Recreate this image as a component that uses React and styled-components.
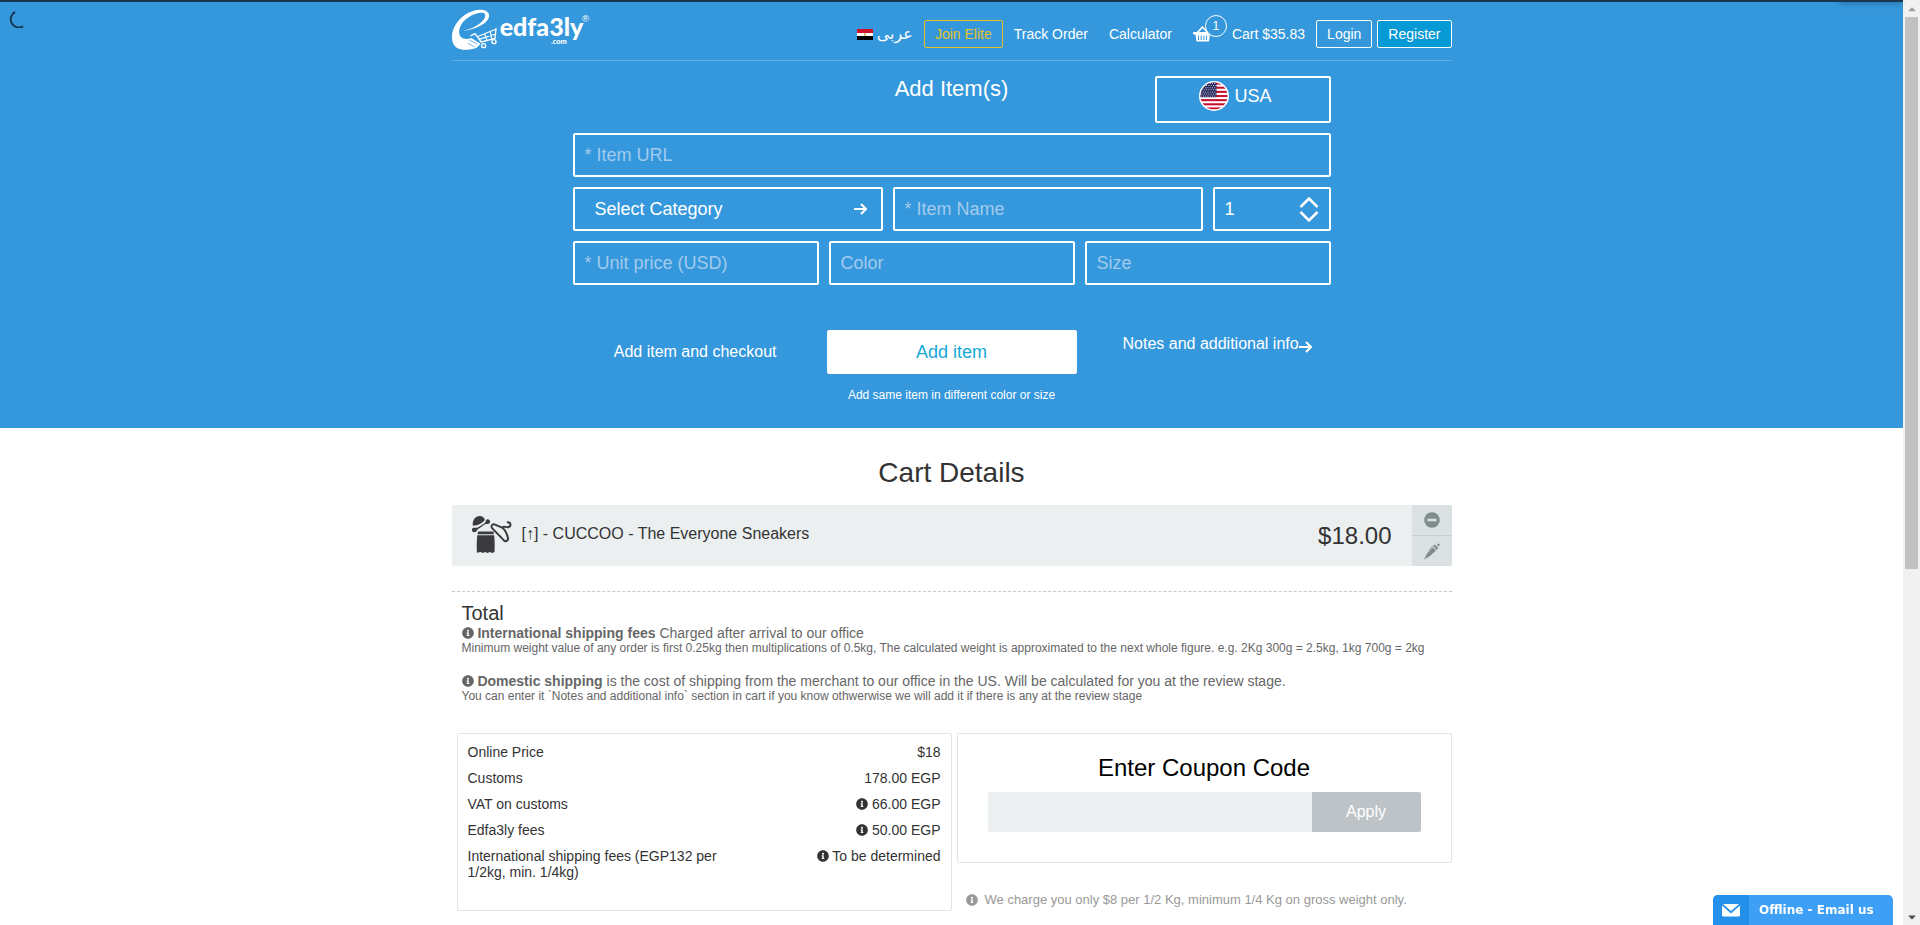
import React from "react";
import styled, { createGlobalStyle } from "styled-components";
import { FaInfoCircle, FaMinusCircle, FaCaretUp, FaCaretDown } from "react-icons/fa";

const GlobalStyle = createGlobalStyle`
  * { box-sizing: border-box; }
  body { margin: 0; background: #fff; color: #333; font-family: "Liberation Sans", Arial, sans-serif; font-size: 14px; }
  h1, h2, h3, p { margin: 0; font-weight: 400; }
  a { color: inherit; text-decoration: none; }
  button, input, select { font: inherit; color: inherit; }
`;

const Shell = styled.div`
  display: grid;
  grid-template-columns: minmax(0, 1fr) 17px;
  height: 100vh;
  overflow: hidden;
`;

const Page = styled.div`
  min-width: 0;
  overflow: hidden;
`;

const Scrollbar = styled.div`
  display: flex;
  flex-direction: column;
  background: #f1f1f1;
  padding: 0 2px;
`;

const ScrollCap = styled.span`
  display: flex;
  align-items: center;
  justify-content: center;
  height: 17px;
  font-size: 12px;
  color: ${(p) => (p.$active ? "#505050" : "#a3a3a3")};
`;

const ScrollTrack = styled.div`
  flex: 1;
`;

const ScrollThumb = styled.div`
  height: 62%;
  background: #c1c1c1;
`;

const Hero = styled.div`
  position: relative;
  background: #3598dc;
  border-top: 2px solid #17384f;
  color: #fff;
  padding-bottom: 25px;
  &::after {
    content: "";
    position: absolute;
    top: -2px;
    right: 0;
    width: 64px;
    height: 2px;
    background: #17384f;
    box-shadow: 0 0 6px #17384f;
  }
`;

const Spinner = styled.svg`
  position: absolute;
  top: 8px;
  left: 9px;
`;

const Container = styled.div`
  width: 100%;
  max-width: 1000px;
  margin: 0 auto;
`;

const Header = styled(Container)`
  display: flex;
  justify-content: space-between;
  align-items: flex-start;
  height: 59px;
  padding-top: 7px;
  border-bottom: 1px solid #62b0e4;
`;

const Nav = styled.nav`
  display: flex;
  align-items: center;
  gap: 11px;
  padding-top: 11px;
`;

const NavGroup = styled.div`
  display: flex;
  align-items: center;
  gap: ${(p) => p.$gap};
`;

const NavLink = styled.a`
  line-height: 28px;
`;

const LanguageLink = styled.a`
  display: flex;
  align-items: center;
  gap: 4px;
  font-family: "DejaVu Sans", sans-serif;
  font-size: 16px;
  line-height: 28px;
`;

const CartLink = styled.a`
  position: relative;
  display: flex;
  align-items: center;
  gap: 20px;
  line-height: 28px;
`;

const CartCount = styled.span`
  position: absolute;
  top: -5px;
  left: 12px;
  width: 22px;
  height: 22px;
  border: 1px solid #fff;
  border-radius: 50%;
  background: #3598dc;
  font-size: 12px;
  line-height: 20px;
  text-align: center;
`;

const NavButton = styled.button`
  height: 28px;
  padding: 0 10px;
  border: 1px solid ${(p) => p.$border || "#fff"};
  border-radius: 2px;
  background: ${(p) => p.$fill || "transparent"};
  color: ${(p) => p.$color || "#fff"};
`;

const ItemForm = styled.form`
  display: flex;
  flex-direction: column;
  gap: 10px;
  max-width: 758px;
  margin: 0 auto;
  padding-top: 15px;
`;

const FormHead = styled.div`
  display: grid;
  grid-template-columns: 1fr auto 1fr;
`;

const FormTitle = styled.h1`
  grid-column: 2;
  font-size: 22px;
  line-height: 26px;
`;

const CountryButton = styled.button`
  justify-self: end;
  display: flex;
  justify-content: center;
  align-items: flex-start;
  gap: 5px;
  width: 176px;
  height: 47px;
  padding: 3px 14px 0 0;
  border: 2px solid #fff;
  border-radius: 2px;
  background: transparent;
  font-size: 18px;
  line-height: 30px;
`;

const FieldRow = styled.div`
  display: grid;
  grid-template-columns: ${(p) => p.$columns};
  gap: 10px;
`;

const Field = styled.div`
  position: relative;
  display: flex;
  align-items: center;
  height: 44px;
  border: 2px solid #fff;
  border-radius: 2px;
`;

const fieldBase = `
  width: 100%;
  height: 100%;
  border: 0;
  outline: 0;
  background: transparent;
  font-size: 18px;
  appearance: none;
`;

const TextInput = styled.input`
  ${fieldBase}
  padding: 0 10px;
  &::placeholder { color: #a2cbed; opacity: 1; }
`;

const NumberInput = styled(TextInput)`
  appearance: textfield;
  &::-webkit-inner-spin-button { appearance: none; }
`;

const CategorySelect = styled.select`
  ${fieldBase}
  padding: 0 20px;
`;

const SelectArrow = styled.span`
  position: absolute;
  right: 14px;
  display: flex;
  pointer-events: none;
`;

const Stepper = styled.div`
  display: flex;
  flex-direction: column;
  gap: 3px;
  padding-right: 10px;
`;

const StepButton = styled.button`
  display: flex;
  padding: 0;
  border: 0;
  background: transparent;
`;

const Actions = styled.div`
  display: grid;
  grid-template-columns: 1fr 250px 1fr;
  column-gap: 46px;
  row-gap: 13px;
  align-items: start;
  margin-top: 35px;
`;

const TextButton = styled.button`
  justify-self: end;
  padding: 0 4px;
  border: 0;
  background: transparent;
  font-size: 16px;
  line-height: 44px;
  white-space: nowrap;
`;

const AddButton = styled.button`
  height: 44px;
  border: 0;
  border-radius: 2px;
  background: #fff;
  color: #14aad8;
  font-size: 18px;
`;

const NotesLink = styled.a`
  display: flex;
  align-items: center;
  font-size: 16px;
  line-height: 28px;
  white-space: nowrap;
  svg { margin-top: 5px; }
`;

const VariantLink = styled.a`
  grid-column: 2;
  font-size: 12px;
  line-height: 16px;
  text-align: center;
`;

const CartTitle = styled.h2`
  padding: 28px 0 15px;
  font-size: 28px;
  line-height: 34px;
  text-align: center;
`;

const CartItem = styled.div`
  display: flex;
  align-items: stretch;
  height: 61px;
  border-radius: 2px;
  overflow: hidden;
  background: #ebeff0;
`;

const ItemName = styled.a`
  display: flex;
  align-items: center;
  gap: 10px;
  flex: 1;
  padding: 0 0 3px 19px;
  font-size: 16px;
`;

const ItemPrice = styled.span`
  align-self: center;
  padding-right: 20px;
  font-size: 24px;
`;

const ItemTools = styled.div`
  display: flex;
  flex-direction: column;
  width: 40px;
`;

const ToolButton = styled.button`
  display: flex;
  flex: 1;
  align-items: center;
  justify-content: center;
  padding: 0;
  border: 0;
  background: #dbe1e3;
  color: #7f8c8d;
  font-size: 16px;
  & + & { border-top: 1px solid #c8d0d2; }
`;

const Totals = styled.section`
  margin-top: 25px;
  padding: 9px 10px 30px;
  border-top: 1px dashed #c8c8c8;
`;

const TotalTitle = styled.h3`
  font-size: 20px;
  line-height: 24px;
`;

const FeeNote = styled.div`
  color: #666;
  & + & { margin-top: 18px; }
`;

const FeeLead = styled.p`
  line-height: 16px;
`;

const FeeDetail = styled.p`
  font-size: 12px;
  line-height: 14px;
`;

const InfoIcon = styled(FaInfoCircle)`
  width: 12px;
  height: 12px;
  vertical-align: -1px;
`;

const Panels = styled.div`
  display: grid;
  grid-template-columns: 1fr 1fr;
  align-items: start;
  gap: 5px;
  padding-left: 5px;
`;

const Panel = styled.section`
  padding: ${(p) => p.$padding};
  border: 1px solid #e0e4e5;
  border-radius: 2px;
`;

const PriceTable = styled.table`
  width: 100%;
  border-collapse: collapse;
  line-height: 16px;
  th, td { padding: 5px 0; font-weight: 400; vertical-align: top; }
  th { width: 55%; text-align: left; }
  td { text-align: right; }
`;

const CouponTitle = styled.h2`
  color: #000;
  font-size: 24px;
  line-height: 28px;
  text-align: center;
`;

const CouponForm = styled.form`
  display: flex;
  height: 40px;
  margin-top: 10px;
`;

const CouponInput = styled.input`
  flex: 1;
  min-width: 0;
  border: 0;
  border-radius: 2px 0 0 2px;
  background: #ebeff0;
`;

const ApplyButton = styled.button`
  width: 109px;
  border: 0;
  border-radius: 0 2px 2px 0;
  background: #bdc3c7;
  color: #fff;
  font-size: 16px;
`;

const ChargeNote = styled.p`
  display: flex;
  align-items: center;
  gap: 7px;
  margin-top: 29px;
  padding-left: 9px;
  color: #999;
  font-size: 13px;
  line-height: 16px;
`;

const ChatButton = styled.button`
  position: fixed;
  right: 27px;
  bottom: 0;
  display: flex;
  align-items: stretch;
  width: 180px;
  height: 30px;
  padding: 0;
  border: 0;
  border-radius: 5px 5px 0 0;
  overflow: hidden;
  background: #3e9ff7;
  color: #fff;
  font-family: "DejaVu Sans", Verdana, sans-serif;
  font-size: 12px;
  font-weight: 700;
`;

const ChatIcon = styled.span`
  display: flex;
  align-items: center;
  justify-content: center;
  width: 36px;
  background: #2590e9;
`;

const ChatLabel = styled.span`
  flex: 1;
  align-self: center;
  padding-left: 10px;
  text-align: left;
`;

function Logo() {
  return (
    <svg width="138" height="42" viewBox="36 27 414 126" fill="#fff" role="img" aria-label="edfa3ly.com">
      <path d="M70 92C112 88 151 66 147 44C143 22 100 26 74 45C45 66 32 96 37 122C42 151 76 155 110 143L122 131L94 114C70 122 52 112 59 85C67 54 112 33 131 39C148 49 118 82 70 92Z" />
      <g fill="none" stroke="#fff" strokeLinecap="round" strokeLinejoin="round">
        <path d="M93 107L105 101L124 126L165 115L168 86" strokeWidth="4" />
        <path d="M112 110L167 88M117 118L167 102M134 103L141 121M151 96L155 117" strokeWidth="3.5" />
        <circle cx="131" cy="137" r="6" strokeWidth="4" />
        <circle cx="162" cy="125" r="6" strokeWidth="4" />
      </g>
      <path d="M90 112L116 120M88 120L112 132M84 130L104 141" stroke="#3598dc" strokeWidth="2" />
      <text x="179" y="109" fontFamily="Lato, sans-serif" fontSize="75" fontWeight="900">edfa3ly</text>
      <text x="333" y="131" fontFamily="Lato, sans-serif" fontSize="22" fontWeight="900">.com</text>
      <text x="426" y="65" fontFamily="Liberation Sans, sans-serif" fontSize="29">®</text>
    </svg>
  );
}

function EgyptFlag() {
  return (
    <svg width="16" height="11" viewBox="0 0 16 11" aria-hidden="true">
      <rect width="16" height="4" fill="#ce1126" />
      <rect y="4" width="16" height="4" fill="#fff" />
      <rect y="7" width="16" height="4" fill="#000" />
      <path d="M7 4.5h2v2H7z" fill="#d9a441" />
    </svg>
  );
}

function UsaFlag() {
  const stripes = [0, 1, 2, 3, 4, 5, 6];
  const stars = [];
  for (let row = 0; row < 7; row += 1) {
    for (let col = 0; col < 7; col += 1) {
      stars.push(<circle key={`${row}-${col}`} cx={2 + col * 2.3 + (row % 2)} cy={2.5 + row * 2.1} r="0.5" />);
    }
  }
  return (
    <svg width="30" height="30" viewBox="0 0 30 30" aria-hidden="true">
      <clipPath id="usa-disc"><circle cx="15" cy="15" r="13.5" /></clipPath>
      <circle cx="15" cy="15" r="15" fill="#fff" />
      <g clipPath="url(#usa-disc)">
        {stripes.map((i) => <rect key={i} y={1.5 + i * 4.15} width="30" height="2.1" fill="#c8102e" />)}
        <rect width="17.5" height="16.2" fill="#2b2a5e" />
        <g fill="#fff">{stars}</g>
      </g>
    </svg>
  );
}

function Basket() {
  return (
    <svg width="19" height="16" viewBox="0 0 19 16" aria-hidden="true">
      <path d="M4 7L9.500 1L15 7" fill="none" stroke="#fff" strokeWidth="1.6" />
      <path d="M1 6h17a1 1 0 0 1 0 2.500h-1L16 15.500H3.500L2.500 8.500H1A1 1 0 0 1 1 6z" fill="#fff" />
      <path d="M5.500 9.500v4.500M8.200 9.500v4.500M10.900 9.500v4.500M13.600 9.500v4.500" stroke="#3598dc" />
    </svg>
  );
}

function Arrow() {
  return (
    <svg width="13" height="12" viewBox="0 0 13 12" fill="none" stroke="currentColor" strokeWidth="2" aria-hidden="true">
      <path d="M0 6H12M7 1L12 6L7 11" />
    </svg>
  );
}

function Chevron({ down }) {
  return (
    <svg width="20" height="11" viewBox="0 0 20 11" fill="none" stroke="#fff" strokeWidth="2.500" aria-hidden="true">
      <path d={down ? "M1.500 1L10 9.500L18.500 1" : "M1.500 10L10 1.500L18.500 10"} />
    </svg>
  );
}

function Pen() {
  return (
    <svg width="16" height="17" viewBox="0 0 16 17" fill="currentColor" aria-hidden="true">
      <path d="M3 10.500L9 4.500L12 7.500L6 13L0 16.500Z" />
      <path d="M9.700 3.800L11.500 2L14.300 5L12.600 6.900Z" />
      <path d="M13 2L14.500 .3L16 1.800L14.500 3.500Z" />
      <path d="M5 7.500L10 2.200L11.200 2.500" fill="none" stroke="currentColor" />
    </svg>
  );
}

function ClothesIcon() {
  return (
    <svg width="41" height="39" viewBox="94 226 124 118" aria-hidden="true">
      <g fill="#3b3a3c">
        <path d="M99 258C98 240 108 229 120 229C129 229 135 235 136 241C127 251 113 259 99 258Z" />
        <path d="M98 267C102 262 109 267 117 262L134 252C140 248 137 241 144 239C151 238 155 248 149 252C144 255 139 252 132 257L116 268C110 272 112 277 104 278C98 279 95 272 98 267Z" />
        <path d="M115 276H162L163 284H114Z" />
        <path d="M113 287H164C166 305 166 320 165 338L158 341L151 338L144 341L137 338L130 341L123 338L112 340C111 320 111 302 113 287Z" />
      </g>
      <path d="M113 285H164" stroke="#bbb" strokeWidth="2" />
      <g fill="none" stroke="#3b3a3c" strokeWidth="6" strokeLinecap="round" strokeLinejoin="round">
        <path d="M157 265C153 257 160 252 167 255L188 264C199 272 204 287 206 297C207 305 197 308 193 302Z" />
        <path d="M190 264C193 258 198 264 206 263C216 260 216 249 205 248" />
      </g>
    </svg>
  );
}

function Envelope() {
  return (
    <svg width="18" height="13" viewBox="0 0 18 13" aria-hidden="true">
      <path d="M1 0H17L9 7Z" fill="#fff" />
      <path d="M0 1.500L9 9.500L18 1.500V11a1.500 1.500 0 0 1-1.500 1.500h-15A1.500 1.500 0 0 1 0 11z" fill="#fff" />
    </svg>
  );
}

const prices = [
  { label: "Online Price", value: "$18" },
  { label: "Customs", value: "178.00 EGP" },
  { label: "VAT on customs", value: "66.00 EGP", info: true },
  { label: "Edfa3ly fees", value: "50.00 EGP", info: true },
  { label: "International shipping fees (EGP132 per 1/2kg, min. 1/4kg)", value: "To be determined", info: true },
];

function TextField({ label, type = "text" }) {
  return (
    <Field>
      <TextInput type={type} placeholder={label} aria-label={label.replace("* ", "")} />
    </Field>
  );
}

export default function App() {
  return (
    <>
      <GlobalStyle />
      <Shell>
        <Page>
          <Hero>
            <Spinner width="18" height="18" viewBox="0 0 18 18" fill="none" aria-hidden="true">
              <path d="M6 2A8 8 0 0 0 14 16.500" stroke="#17384f" strokeWidth="2" />
            </Spinner>
            <Header as="header">
              <a href="#home"><Logo /></a>
              <Nav>
                <LanguageLink href="#ar" lang="ar"><EgyptFlag />عربى</LanguageLink>
                <NavButton type="button" $border="#e6c229" $color="#e6c229">Join Elite</NavButton>
                <NavGroup $gap="21px">
                  <NavLink href="#track">Track Order</NavLink>
                  <NavLink href="#calculator">Calculator</NavLink>
                  <CartLink href="#cart"><Basket /><CartCount>1</CartCount>Cart $35.83</CartLink>
                </NavGroup>
                <NavGroup $gap="5px">
                  <NavButton type="button">Login</NavButton>
                  <NavButton type="button" $fill="#0599d5">Register</NavButton>
                </NavGroup>
              </Nav>
            </Header>
            <ItemForm onSubmit={(e) => e.preventDefault()}>
              <FormHead>
                <FormTitle>Add Item(s)</FormTitle>
                <CountryButton type="button"><UsaFlag />USA</CountryButton>
              </FormHead>
              <TextField label="* Item URL" />
              <FieldRow $columns="310fr 310fr 118fr">
                <Field>
                  <CategorySelect aria-label="Select Category">
                    <option>Select Category</option>
                  </CategorySelect>
                  <SelectArrow><Arrow /></SelectArrow>
                </Field>
                <TextField label="* Item Name" />
                <Field>
                  <NumberInput type="number" min="1" defaultValue="1" aria-label="Quantity" />
                  <Stepper>
                    <StepButton type="button" aria-label="Increase quantity"><Chevron /></StepButton>
                    <StepButton type="button" aria-label="Decrease quantity"><Chevron down /></StepButton>
                  </Stepper>
                </Field>
              </FieldRow>
              <FieldRow $columns="1fr 1fr 1fr">
                <TextField label="* Unit price (USD)" />
                <TextField label="Color" />
                <TextField label="Size" />
              </FieldRow>
              <Actions>
                <TextButton type="button">Add item and checkout</TextButton>
                <AddButton type="submit">Add item</AddButton>
                <NotesLink href="#notes">Notes and additional info<Arrow /></NotesLink>
                <VariantLink href="#variant">Add same item in different color or size</VariantLink>
              </Actions>
            </ItemForm>
          </Hero>

          <Container as="main">
            <CartTitle>Cart Details</CartTitle>
            <CartItem>
              <ItemName href="#item"><ClothesIcon />[↑] - CUCCOO - The Everyone Sneakers</ItemName>
              <ItemPrice>$18.00</ItemPrice>
              <ItemTools>
                <ToolButton type="button" aria-label="Remove item"><FaMinusCircle /></ToolButton>
                <ToolButton type="button" aria-label="Edit item"><Pen /></ToolButton>
              </ItemTools>
            </CartItem>
            <Totals>
              <TotalTitle>Total</TotalTitle>
              <FeeNote>
                <FeeLead><InfoIcon /> <b>International shipping fees</b> Charged after arrival to our office</FeeLead>
                <FeeDetail>Minimum weight value of any order is first 0.25kg then multiplications of 0.5kg, The calculated weight is approximated to the next whole figure. e.g. 2Kg 300g = 2.5kg, 1kg 700g = 2kg</FeeDetail>
              </FeeNote>
              <FeeNote>
                <FeeLead><InfoIcon /> <b>Domestic shipping</b> is the cost of shipping from the merchant to our office in the US. Will be calculated for you at the review stage.</FeeLead>
                <FeeDetail>You can enter it `Notes and additional info` section in cart if you know othwerwise we will add it if there is any at the review stage</FeeDetail>
              </FeeNote>
            </Totals>
            <Panels>
              <Panel $padding="5px 10px 25px">
                <PriceTable>
                  <tbody>
                    {prices.map((p) => (
                      <tr key={p.label}>
                        <th scope="row">{p.label}</th>
                        <td>{p.info && <InfoIcon />} {p.value}</td>
                      </tr>
                    ))}
                  </tbody>
                </PriceTable>
              </Panel>
              <div>
                <Panel $padding="20px 30px 30px">
                  <CouponTitle>Enter Coupon Code</CouponTitle>
                  <CouponForm onSubmit={(e) => e.preventDefault()}>
                    <CouponInput type="text" aria-label="Coupon code" />
                    <ApplyButton type="submit">Apply</ApplyButton>
                  </CouponForm>
                </Panel>
                <ChargeNote><InfoIcon />We charge you only $8 per 1/2 Kg, minimum 1/4 Kg on gross weight only.</ChargeNote>
              </div>
            </Panels>
          </Container>
        </Page>
        <Scrollbar aria-hidden="true">
          <ScrollCap><FaCaretUp /></ScrollCap>
          <ScrollTrack><ScrollThumb /></ScrollTrack>
          <ScrollCap $active><FaCaretDown /></ScrollCap>
        </Scrollbar>
      </Shell>
      <ChatButton type="button">
        <ChatIcon><Envelope /></ChatIcon>
        <ChatLabel>Offline - Email us</ChatLabel>
      </ChatButton>
    </>
  );
}
